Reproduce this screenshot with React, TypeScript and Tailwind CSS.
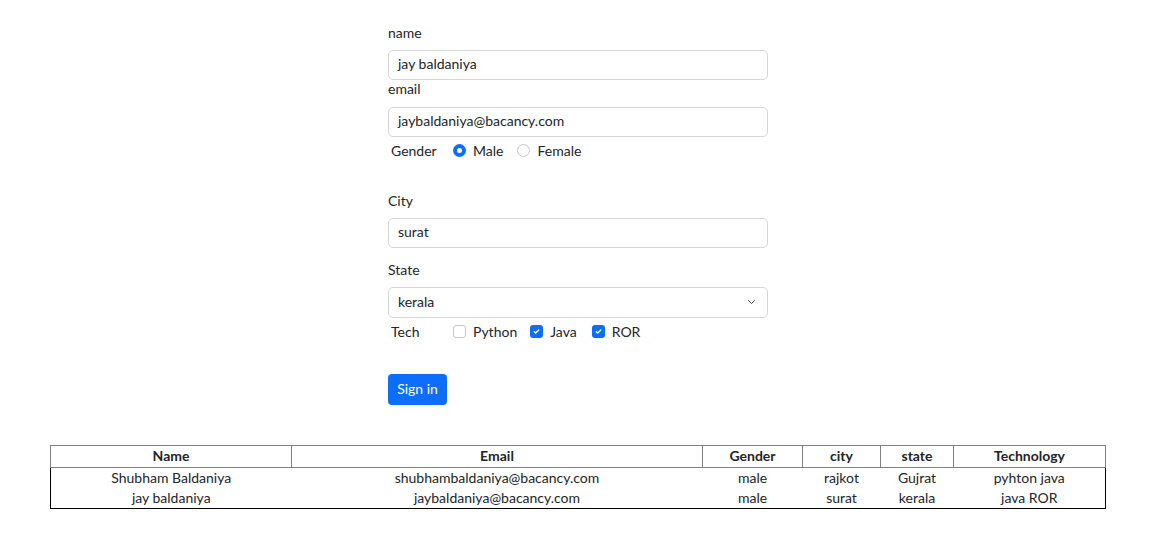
import React from 'react';

const rows = [
  { name: 'Shubham Baldaniya', email: 'shubhambaldaniya@bacancy.com', gender: 'male', city: 'rajkot', state: 'Gujrat', tech: 'pyhton java' },
  { name: 'jay baldaniya', email: 'jaybaldaniya@bacancy.com', gender: 'male', city: 'surat', state: 'kerala', tech: 'java ROR' },
];

const cols = [
  { label: 'Name', w: 'w-[241px]' },
  { label: 'Email', w: 'w-[411px]' },
  { label: 'Gender', w: 'w-[100px]' },
  { label: 'city', w: 'w-[78px]' },
  { label: 'state', w: 'w-[73px]' },
  { label: 'Technology', w: 'w-[152px]' },
];

function Radio({ checked }: { checked?: boolean }) {
  return checked ? (
    <span className="flex h-[13px] w-[13px] items-center justify-center rounded-full bg-[#0d6efd]">
      <span className="h-[5px] w-[5px] rounded-full bg-white" />
    </span>
  ) : (
    <span className="h-[13px] w-[13px] rounded-full border border-[#c4c6c8] bg-white" />
  );
}

function Check({ checked }: { checked?: boolean }) {
  return checked ? (
    <span className="flex h-[13px] w-[13px] items-center justify-center rounded-[3px] bg-[#0d6efd]">
      <svg width="9" height="9" viewBox="0 0 20 20" fill="none">
        <path d="M5 10.5l3.2 3L15 6.5" stroke="white" strokeWidth="3" strokeLinecap="round" strokeLinejoin="round" />
      </svg>
    </span>
  ) : (
    <span className="h-[13px] w-[13px] rounded-[3px] border border-[#c4c6c8] bg-white" />
  );
}

function Field({ value }: { value: string }) {
  return (
    <div className="flex h-[30px] items-center rounded-[5px] border border-[#d3d6d9] bg-white pb-[3px] pl-[9px] text-[14px] text-[#212529]">
      {value}
    </div>
  );
}

export default function App() {
  return (
    <div className="min-h-[560px] w-[1150px] bg-white font-['Lato',sans-serif] text-[14px] text-[#212529]">
      {/* Form */}
      <div className="ml-[388px] w-[380px] pt-[23px]">
        <div className="mb-[6px] h-[21px] leading-[19px]">name</div>
        <Field value="jay baldaniya" />
        <div className="mb-[6px] h-[21px] leading-[18px]">email</div>
        <Field value="jaybaldaniya@bacancy.com" />

        <div className="mt-[2px] flex h-[24px] items-center pb-[2px] pl-[3px]">
          <span className="w-[62px]">Gender</span>
          <Radio checked />
          <span className="ml-[7px] mr-[14px]">Male</span>
          <Radio />
          <span className="ml-[7px]">Female</span>
        </div>

        <div className="mb-[6px] mt-[28px] h-[21px] leading-[20px]">City</div>
        <Field value="surat" />

        <div className="mb-[6px] mt-[12px] h-[21px] leading-[20px]">State</div>
        <div className="flex h-[31px] items-center justify-between rounded-[5px] border border-[#d3d6d9] bg-white pb-[2px] pl-[9px] pr-[10px]">
          <span>kerala</span>
          <svg width="11" height="8" viewBox="0 0 16 16" fill="none">
            <path d="M2 5l6 6 6-6" stroke="#343a40" strokeWidth="2" strokeLinecap="round" strokeLinejoin="round" />
          </svg>
        </div>

        <div className="mt-[3px] flex h-[24px] items-center pb-[3px] pl-[3px]">
          <span className="w-[62px]">Tech</span>
          <Check />
          <span className="ml-[7px] mr-[13px]">Python</span>
          <Check checked />
          <span className="ml-[7px] mr-[15px]">Java</span>
          <Check checked />
          <span className="ml-[7px]">ROR</span>
        </div>

        <button className="mt-[29px] flex h-[31px] w-[59px] items-center justify-center rounded-[4px] bg-[#0d6efd] pb-[2px] text-[14px] text-white">
          Sign in
        </button>
      </div>

      {/* Table */}
      <div className="ml-[50px] mt-[40px]">
        <table className="w-[1055px] table-fixed border-collapse text-[14px] text-[#212529]">
          <thead>
            <tr>
              {cols.map(c => (
                <th key={c.label} className={`${c.w} h-[22px] border border-[#808080] p-0 pb-[2px] text-center font-bold leading-[18px]`}>
                  {c.label}
                </th>
              ))}
            </tr>
          </thead>
          <tbody className="border border-black">
            {rows.map(r => (
              <tr key={r.email}>
                <td className="h-[20px] p-0 pb-[1px] text-center leading-[19px]">{r.name}</td>
                <td className="p-0 pb-[1px] text-center leading-[19px]">{r.email}</td>
                <td className="p-0 pb-[1px] text-center leading-[19px]">{r.gender}</td>
                <td className="p-0 pb-[1px] text-center leading-[19px]">{r.city}</td>
                <td className="p-0 pb-[1px] text-center leading-[19px]">{r.state}</td>
                <td className="p-0 pb-[1px] text-center leading-[19px]">{r.tech}</td>
              </tr>
            ))}
          </tbody>
        </table>
      </div>
    </div>
  );
}
